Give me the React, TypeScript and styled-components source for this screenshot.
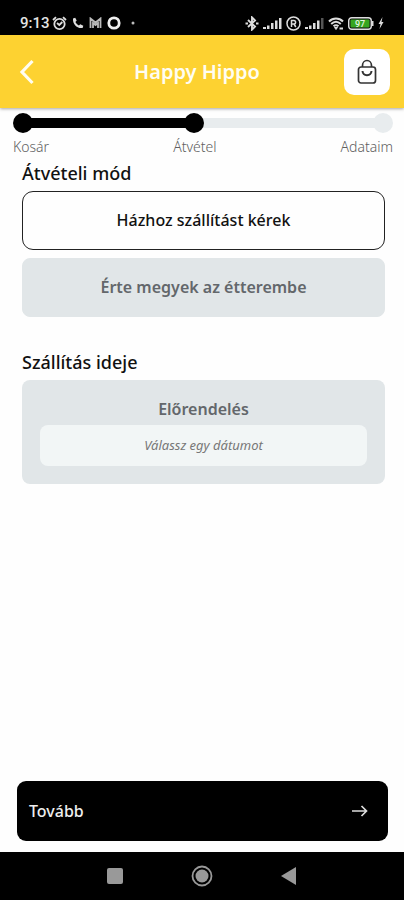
import React, { useState } from "react";
import styled, { createGlobalStyle } from "styled-components";

const GlobalStyle = createGlobalStyle`
  *, *::before, *::after { box-sizing: border-box; }
  body {
    margin: 0;
    background: #fefefe;
    color: #111;
    font-family: "Noto Sans", "Open Sans", sans-serif;
  }
  button, input { font-family: inherit; }
`;

const Screen = styled.div`
  display: flex;
  flex-direction: column;
  min-height: 100vh;
`;

const StatusBar = styled.div`
  display: flex;
  align-items: center;
  justify-content: space-between;
  height: 35px;
  padding: 11px 20px 0;
  background: #000;
  color: #e4e4e4;
`;

const StatusGroup = styled.div<{ $gap: number }>`
  display: flex;
  align-items: center;
  gap: ${(p) => p.$gap}px;
`;

const Clock = styled.time`
  margin-right: -3px;
  font: 500 15px/20px Roboto, sans-serif;
`;

const Header = styled.header`
  display: grid;
  grid-template-columns: 46px 1fr 46px;
  align-items: center;
  height: 73px;
  padding: 0 14px 0 4px;
  background: #fdd231;
  box-shadow: 0 1px 3px rgba(0, 0, 0, 0.35);
`;

const Title = styled.h1`
  margin: 0;
  color: #fffdf2;
  font-size: 20px;
  font-weight: 600;
  line-height: 28px;
  text-align: center;
`;

const IconButton = styled.button<{ $filled?: boolean }>`
  display: flex;
  align-items: center;
  justify-content: center;
  width: 46px;
  height: 46px;
  padding: 0;
  border: 0;
  border-radius: 10px;
  background: ${(p) => (p.$filled ? "#fff" : "transparent")};
  cursor: pointer;
`;

const Stepper = styled.nav`
  padding: 5px 11px 0 13px;
`;

const Track = styled.div`
  display: flex;
  align-items: center;
  height: 20px;
`;

const Dot = styled.span<{ $done?: boolean }>`
  z-index: 1;
  flex: none;
  width: 20px;
  height: 20px;
  border-radius: 50%;
  background: ${(p) => (p.$done ? "#000" : "#e8ecee")};
`;

const Bar = styled.span<{ $done?: boolean; $share: number }>`
  flex: ${(p) => p.$share} 1 0;
  height: 10px;
  margin: 0 -2px;
  background: ${(p) => (p.$done ? "#000" : "#e8ecee")};
`;

const StepLabels = styled.ol`
  display: flex;
  justify-content: space-between;
  margin: 0;
  padding: 4px 0 0;
  list-style: none;
`;

const StepLabel = styled.li`
  color: #606060;
  font-size: 14px;
  font-weight: 300;
  line-height: 20px;
`;

const Content = styled.main`
  flex: 1;
  padding: 4px 19px 24px 22px;
`;

const Section = styled.section`
  margin-bottom: 33px;
`;

const SectionTitle = styled.h2`
  margin: 0 0 6px;
  font-size: 18px;
  font-weight: 500;
  line-height: 24px;
`;

const Options = styled.div`
  display: flex;
  flex-direction: column;
  gap: 8px;
`;

const Option = styled.button<{ $selected: boolean }>`
  width: 100%;
  height: 59px;
  padding: 0 16px 2px;
  border: 1px solid ${(p) => (p.$selected ? "#222" : "#e1e6e8")};
  border-radius: ${(p) => (p.$selected ? 11 : 8)}px;
  background: ${(p) => (p.$selected ? "#fefefe" : "#e1e6e8")};
  color: ${(p) => (p.$selected ? "#111" : "#63676b")};
  font-size: 16px;
  font-weight: ${(p) => (p.$selected ? 500 : 600)};
  line-height: 22px;
  cursor: pointer;
`;

const DatePanel = styled.div`
  display: flex;
  flex-direction: column;
  align-items: center;
  gap: 5px;
  padding: 18px;
  border-radius: 8px;
  background: #e1e6e8;
`;

const DateLabel = styled.label`
  color: #63676b;
  font-size: 16px;
  font-weight: 600;
  line-height: 22px;
`;

const DateField = styled.input`
  width: 100%;
  height: 41px;
  padding: 0 8px 2px;
  border: 0;
  border-radius: 8px;
  background: #f2f6f6;
  color: #777;
  font-size: 13px;
  font-style: italic;
  text-align: center;
  &::placeholder { color: #777; opacity: 1; }
`;

const Footer = styled.footer`
  padding: 0 16px 11px 17px;
`;

const NextButton = styled.button`
  display: flex;
  align-items: center;
  justify-content: space-between;
  width: 100%;
  height: 60px;
  padding: 0 20px 0 12px;
  border: 0;
  border-radius: 9px;
  background: #000;
  color: #eee;
  font-size: 16px;
  font-weight: 500;
  line-height: 22px;
  cursor: pointer;
`;

const SystemNav = styled.nav`
  display: flex;
  align-items: center;
  justify-content: center;
  gap: 63px;
  height: 48px;
  background: #000;
`;

const SystemButton = styled.button`
  display: flex;
  padding: 0;
  border: 0;
  background: none;
  cursor: pointer;
`;

const AlarmIcon = () => (
  <svg width="15" height="15" viewBox="0 0 15 15" fill="none" stroke="#ddd" strokeWidth="1.8">
    <circle cx="7.5" cy="8" r="5.2" />
    <path d="M1 4 4 1.2M14 4l-3-2.8M5 7l2.3 2 3-3" />
  </svg>
);

const PhoneIcon = () => (
  <svg width="12" height="12" viewBox="0 0 12 12" fill="#ddd">
    <path d="M1 1.4 3.2.7 4.7 3.6 3.4 5c.8 1.5 1.9 2.6 3.5 3.4l1.4-1.2 3 1.5-.7 2.2C5.4 12 .4 7 1 1.4Z" />
  </svg>
);

const MailIcon = () => (
  <svg width="13" height="12" viewBox="0 0 13 12" fill="none" stroke="#bbb" strokeWidth="1.8">
    <path d="M1.5 11V1.5l5 4 5-4V11M4 11V6l2.5 2L9 6v5" />
  </svg>
);

const RingIcon = () => (
  <svg width="14" height="14" viewBox="0 0 14 14" fill="none" stroke="#eee" strokeWidth="2.8">
    <circle cx="7" cy="7" r="5.2" />
  </svg>
);

const MoreDot = () => (
  <svg width="14" height="4" viewBox="0 0 14 4">
    <circle cx="7" cy="2" r="1.5" fill="#bbb" />
  </svg>
);

const BluetoothIcon = () => (
  <svg width="14" height="15" viewBox="0 0 14 15" fill="none" stroke="#ddd" strokeWidth="1.9">
    <path d="m3 4 7 6.6-3 3V1.4l3 3L3 11" />
    <path d="M.5 7.5H3M11 7.5h2.5" strokeWidth="2" />
  </svg>
);

const SignalIcon = ({ weak = false }: { weak?: boolean }) => (
  <svg width="19" height="12" viewBox="0 0 19 12" fill="#ddd">
    <path d="M0 10h3v2H0ZM4 8.5h2.5V12H4ZM8 6h2.5v6H8ZM12 3.5h2.5V12H12Z" />
    <path d="M16 1h2.5v11H16Z" fill={weak ? "#555" : "#ddd"} />
  </svg>
);

const RegisteredIcon = () => (
  <svg width="15" height="15" viewBox="0 0 15 15" fill="none" stroke="#ddd" strokeWidth="1.5">
    <circle cx="7.5" cy="7.5" r="6.5" />
    <path d="M5.5 11V4.5h2.3a1.8 1.8 0 0 1 0 3.6H5.5M8 8l1.8 3" />
  </svg>
);

const WifiIcon = () => (
  <svg width="16" height="13" viewBox="0 0 16 13" fill="none" stroke="#ddd" strokeWidth="2">
    <path d="M1 4.5c4-4 10-4 14 0M3.2 7c3-2.8 6.6-2.8 9.6 0M5.5 9.3c1.5-1.3 3.5-1.3 5 0" />
    <path d="m6.500 10.500 1.500 2 1.500-2Z" fill="#ddd" strokeWidth="1" />
    <path d="M11.500 11.500H15" />
  </svg>
);

const BatteryIcon = () => (
  <svg width="26" height="13" viewBox="0 0 26 13">
    <rect x="0.7" y="0.7" width="22.6" height="11.6" rx="3" fill="#111" stroke="#ddd" strokeWidth="1.4" />
    <rect x="2.5" y="2.5" width="19" height="8" rx="1" fill="#36a51e" />
    <path d="M24 4h1.500v5H24Z" fill="#ddd" />
    <text x="12" y="9.5" fill="#e6f5e0" fontFamily="Roboto, sans-serif" fontSize="9" fontWeight="500" textAnchor="middle">97</text>
  </svg>
);

const BoltIcon = () => (
  <svg width="6" height="12" viewBox="0 0 6 12" fill="#ddd">
    <path d="M4.5 0 .5 7h2L1.500 12l4-7h-2Z" />
  </svg>
);

const BackIcon = () => (
  <svg width="16" height="26" viewBox="0 0 16 26" fill="none" stroke="#fffdf0" strokeWidth="3.2">
    <path d="M13.5 2 3 13l10.500 11" />
  </svg>
);

const BagIcon = () => (
  <svg width="22" height="26" viewBox="0 0 22 26" fill="none" stroke="#333" strokeWidth="1.7">
    <rect x="2.5" y="8" width="17" height="16" rx="2.5" />
    <path d="M6.500 8V6.500a4.500 5 0 0 1 9 0V8" />
    <path d="M6.5 12c.5 5.500 8.500 5.500 9 0" strokeWidth="2" />
  </svg>
);

const ArrowIcon = () => (
  <svg width="16" height="14" viewBox="0 0 16 14" fill="none" stroke="#ddd" strokeWidth="1.7">
    <path d="M0 7h14.500M9.500 2l5 5-5 5" />
  </svg>
);

const steps = ["Kosár", "Átvétel", "Adataim"];
const modes = ["Házhoz szállítást kérek", "Érte megyek az étterembe"];

export default function App() {
  const [mode, setMode] = useState(0);
  const [date, setDate] = useState("");

  return (
    <>
      <GlobalStyle />
      <Screen>
        <StatusBar>
          <StatusGroup $gap={5}>
            <Clock>9:13</Clock>
            <AlarmIcon />
            <PhoneIcon />
            <MailIcon />
            <RingIcon />
            <MoreDot />
          </StatusGroup>
          <StatusGroup $gap={4}>
            <BluetoothIcon />
            <SignalIcon />
            <RegisteredIcon />
            <SignalIcon weak />
            <WifiIcon />
            <BatteryIcon />
            <BoltIcon />
          </StatusGroup>
        </StatusBar>

        <Header>
          <IconButton aria-label="Vissza"><BackIcon /></IconButton>
          <Title>Happy Hippo</Title>
          <IconButton $filled aria-label="Kosár"><BagIcon /></IconButton>
        </Header>

        <Stepper aria-label="Lépések">
          <Track>
            <Dot $done />
            <Bar $done $share={151} />
            <Dot $done />
            <Bar $share={169} />
            <Dot />
          </Track>
          <StepLabels>
            {steps.map((step) => <StepLabel key={step}>{step}</StepLabel>)}
          </StepLabels>
        </Stepper>

        <Content>
          <Section>
            <SectionTitle>Átvételi mód</SectionTitle>
            <Options>
              {modes.map((name, i) => (
                <Option key={name} $selected={mode === i} aria-pressed={mode === i} onClick={() => setMode(i)}>
                  {name}
                </Option>
              ))}
            </Options>
          </Section>
          <Section>
            <SectionTitle>Szállítás ideje</SectionTitle>
            <DatePanel>
              <DateLabel htmlFor="date">Előrendelés</DateLabel>
              <DateField
                id="date"
                placeholder="Válassz egy dátumot"
                value={date}
                onChange={(e) => setDate(e.target.value)}
              />
            </DatePanel>
          </Section>
        </Content>

        <Footer>
          <NextButton>Tovább<ArrowIcon /></NextButton>
        </Footer>

        <SystemNav aria-label="Rendszer">
          <SystemButton aria-label="Alkalmazások">
            <svg width="24" height="24" viewBox="0 0 24 24"><rect x="4" y="4" width="16" height="16" rx="2" fill="#999" /></svg>
          </SystemButton>
          <SystemButton aria-label="Kezdőlap">
            <svg width="24" height="24" viewBox="0 0 24 24">
              <circle cx="12" cy="12" r="9.5" fill="none" stroke="#999" strokeWidth="1.8" />
              <circle cx="12" cy="12" r="6.5" fill="#999" />
            </svg>
          </SystemButton>
          <SystemButton aria-label="Vissza a rendszerben">
            <svg width="24" height="24" viewBox="0 0 24 24"><path d="M4 12 19 3v18Z" fill="#999" /></svg>
          </SystemButton>
        </SystemNav>
      </Screen>
    </>
  );
}
